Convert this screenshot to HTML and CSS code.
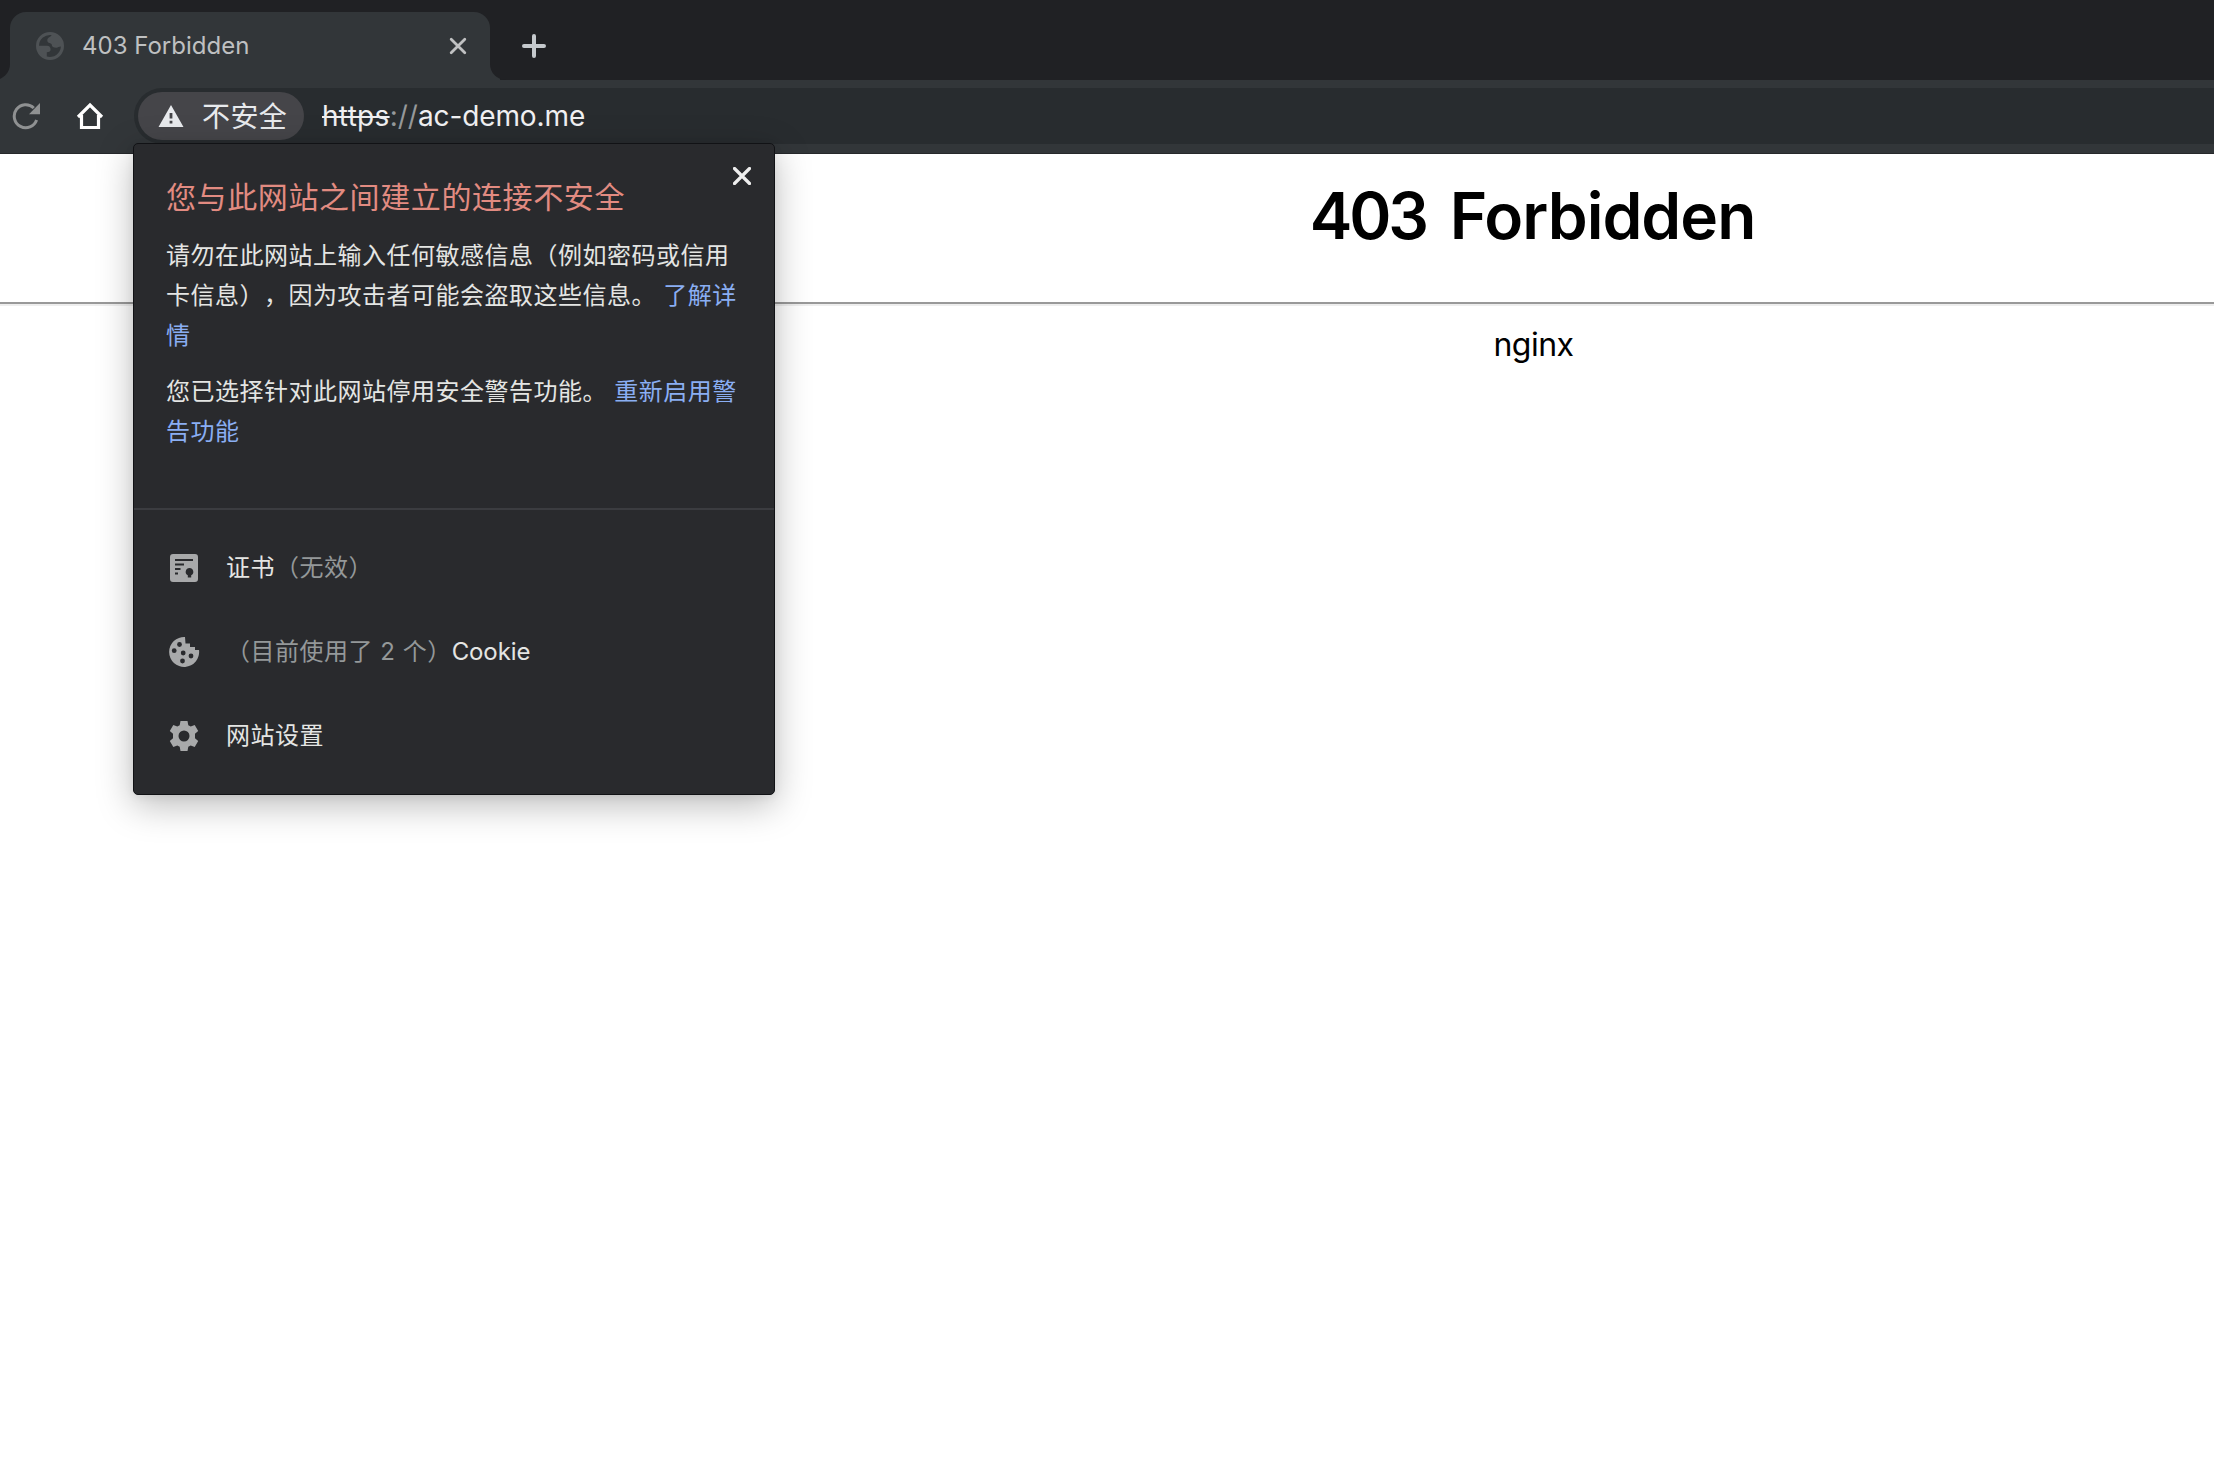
FILE: index.html
```html
<!DOCTYPE html>
<html lang="zh-CN">
<head>
<meta charset="utf-8">
<title>403 Forbidden</title>
<link rel="stylesheet" href="styles.css">
</head>
<body>
<header class="browser">
  <div class="tab-strip">
    <div class="tab">
      <svg class="globe" width="28" height="28" viewBox="0 0 28 28"><path fill="currentColor" fill-rule="evenodd" d="M14 0a14 14 0 1 0 0 28 14 14 0 0 0 0-28zM3 13.700A11 11 0 0 1 15.500 3.100C15.200 5.500 11.300 5 11.300 8.500c0 3 4.400 2.500 4.400 4 0 2.500 2 3.200 4.500 3.200 2 0 2.500-1.200 4.700-1.200A11 11 0 0 1 10.800 24.500v-4.300c2.500 0 3.800-.700 3.800-2.700 0-2.500-1.200-3.800-3.600-3.800z"/></svg>
      <span class="tab-title">403 Forbidden</span>
      <svg class="tab-close" width="18" height="18" viewBox="0 0 18 18"><path d="M2.200 2.200l13.600 13.600M15.800 2.200L2.200 15.800" fill="none" stroke="currentColor" stroke-width="2.800" stroke-linecap="round"/></svg>
    </div>
    <svg class="new-tab" width="24" height="24" viewBox="0 0 24 24"><path d="M12 2v20M2 12h20" fill="none" stroke="currentColor" stroke-width="4" stroke-linecap="round"/></svg>
  </div>
  <div class="toolbar">
    <svg class="reload" width="28" height="28" viewBox="0 0 28 28"><path d="M24.600 18A11.500 11.500 0 1 1 21.800 6" fill="none" stroke="currentColor" stroke-width="3"/><path d="M28 1v11.300H17z" fill="currentColor"/></svg>
    <svg class="home" width="28" height="28" viewBox="0 0 28 28"><path d="M2 15L14 3l12 12M5.500 13v12.500h17V13" fill="none" stroke="currentColor" stroke-width="3.200"/></svg>
    <div class="omnibox">
      <div class="security">
        <svg width="26" height="22" viewBox="0 0 26 22"><path fill="currentColor" fill-rule="evenodd" d="M13 0l12.500 22H.500zM11.600 8v5.500h2.800V8zm0 7.800v2.800h2.800v-2.800z"/></svg>
        <span>不安全</span>
      </div>
      <div class="url"><s>https</s><span class="sep">://</span><span class="host">ac-demo.me</span></div>
    </div>
  </div>
</header>
<main class="page">
  <h1><span class="code">403</span> Forbidden</h1>
  <div class="rule"></div>
  <p class="server">nginx</p>
</main>
<aside class="popup">
  <section class="warning">
    <svg class="popup-close" width="18" height="18" viewBox="0 0 18 18"><path d="M1.500 1.500l15 15M16.500 1.500l-15 15" fill="none" stroke="currentColor" stroke-width="3.200" stroke-linecap="round"/></svg>
    <h2>您与此网站之间建立的连接不安全</h2>
    <p>请勿在此网站上输入任何敏感信息（例如密码或信用<br>卡信息），因为攻击者可能会盗取这些信息。 <a>了解详<br>情</a></p>
    <p>您已选择针对此网站停用安全警告功能。 <a>重新启用警<br>告功能</a></p>
  </section>
  <ul class="settings">
    <li>
      <svg width="32" height="32" viewBox="0 0 32 32"><path fill="currentColor" fill-rule="evenodd" d="M5 2h22q3 0 3 3v22q0 3-3 3H5q-3 0-3-3V5q0-3 3-3zm2 5v2h18V7zm0 4.500v2h9v-2zm0 4.500v2h5.500v-2zm0 4.500v2h3v-2zm14.500-4.500a3.800 3.800 0 0 0-1.700 7.200V25.500h3.400V23.200a3.800 3.800 0 0 0-1.700-7.200z"/></svg>
      <span>证书<span class="muted">（无效）</span></span>
    </li>
    <li>
      <svg width="32" height="32" viewBox="0 0 32 32"><path fill="currentColor" d="M17 1A15 15 0 1 0 31 14h-4v-3h-5V7.500h-4.500z"/><g class="chips"><circle cx="11.500" cy="8.500" r="2.400"/><circle cx="6.200" cy="14.700" r="2.400"/><circle cx="15.200" cy="17" r="2.400"/><circle cx="23" cy="20" r="2.400"/><circle cx="14.500" cy="25" r="2.400"/></g></svg>
      <span><span class="muted">（目前使用了 2 个）</span><span class="cookie">Cookie</span></span>
    </li>
    <li>
      <svg width="32" height="32" viewBox="0 0 32 32"><path fill="currentColor" fill-rule="evenodd" d="M12.500 1h7l.800 4.200 2.400 1.400 4-1.500 3.500 6-3.200 2.700v4.400l3.200 2.700-3.500 6-4-1.500-2.400 1.400-.800 4.200h-7l-.800-4.200-2.400-1.400-4 1.500-3.500-6L5 18.200v-4.400l-3.200-2.700 3.500-6 4 1.500 2.400-1.400zM16 10.500a5.500 5.500 0 1 0 0 11 5.500 5.500 0 0 0 0-11z"/></svg>
      <span>网站设置</span>
    </li>
  </ul>
</aside>
</body>
</html>
```

FILE: styles.css
```css
* { box-sizing: border-box; }
html, body { margin: 0; height: 100%; }
body {
  position: relative;
  overflow: hidden;
  background: #fff;
  font-family: Inter, "Noto Sans CJK SC", sans-serif;
  text-spacing-trim: space-all;
}
svg { display: block; flex: none; }
h1, h2, p, ul { margin: 0; padding: 0; }

.browser { height: 154px; border-bottom: 1px solid #26282b; background: #323639; }
.tab-strip {
  display: flex;
  align-items: flex-start;
  height: 80px;
  padding: 12px 0 0 10px;
  background: linear-gradient(#323639, #323639) 0 100% / 500px 16px no-repeat, #202124;
}
.tab {
  position: relative;
  display: flex;
  align-items: center;
  width: 480px;
  height: 68px;
  padding: 0 23px 0 26px;
  border-radius: 16px 16px 0 0;
  background: #323639;
}
.tab::before, .tab::after {
  content: "";
  position: absolute;
  bottom: 0;
  width: 16px;
  height: 16px;
  background: #202124;
}
.tab::before { left: -16px; border-bottom-right-radius: 16px; }
.tab::after { right: -16px; border-bottom-left-radius: 16px; }
.globe { color: #4e5255; }
.tab-title { margin-left: 18px; padding-bottom: 2px; color: #bfc0c1; font-size: 24px; white-space: nowrap; }
.tab-close { margin-left: auto; color: #c0c1c2; }
.new-tab { margin: 22px 0 0 32px; color: #c5c9cd; }

.toolbar { display: flex; align-items: center; height: 72px; padding: 0 0 0 12px; }
.reload { color: #8f9192; }
.home { margin-left: 36px; color: #fff; }
.omnibox {
  display: flex;
  align-items: center;
  flex: 1;
  height: 56px;
  margin-left: 30px;
  padding-left: 4px;
  border-radius: 28px 0 0 28px;
  background: #282c2f;
}
.security {
  display: flex;
  align-items: center;
  width: 166px;
  height: 48px;
  padding-left: 20px;
  border-radius: 24px;
  background: #454549;
  color: #e8eaed;
  font-size: 28px;
  white-space: nowrap;
}
.security span { margin-left: 18px; padding-bottom: 3px; letter-spacing: 0.4px; }
.url { margin-left: 18px; color: #f0f0f2; font-size: 28px; white-space: nowrap; }
.url s { letter-spacing: 0.3px; }
.url .sep { color: #96999b; }
.url .host { letter-spacing: -0.1px; }

.page { text-align: center; color: #000; }
.page h1, .server { padding-left: 853px; }
.page h1 {
  padding-top: 22px;
  padding-left: 851px;
  font-size: 64px;
  line-height: 80px;
  font-weight: 600;
  letter-spacing: -1px;
  word-spacing: 9px;
}
.code { letter-spacing: -3.2px; }
.rule { height: 4px; margin-top: 46px; border-top: 2px solid #999; border-bottom: 2px solid #eee; }
.server { margin-top: 19px; font-size: 32px; line-height: 40px; letter-spacing: -0.5px; }

.popup {
  position: absolute;
  left: 133px;
  top: 143px;
  width: 642px;
  height: 652px;
  border: 1px solid #111215;
  border-radius: 5px;
  background: #292a2d;
  color: #e4e5e3;
  font-size: 24px;
  letter-spacing: 0.5px;
  white-space: nowrap;
  box-shadow: 0 10px 36px rgba(0, 0, 0, 0.27), 0 2px 10px rgba(0, 0, 0, 0.06);
}
.warning { position: relative; height: 366px; padding: 31px 0 0 32px; border-bottom: 2px solid #3b3c40; }
.popup-close { position: absolute; right: 23px; top: 23px; color: #eee; }
.popup h2 { color: #e28b81; font-size: 30px; line-height: 44px; font-weight: 400; letter-spacing: 0.6px; }
.popup p { margin-top: 16px; line-height: 40px; }
.popup h2 + p { margin-top: 17px; }
.popup a { color: #8aaef3; }
.settings { list-style: none; padding: 16px 0 0 34px; }
.settings li { display: flex; align-items: center; height: 84px; }
.settings svg { color: #a8a9aa; }
.settings li > span { margin-left: 26px; padding-bottom: 5px; }
.muted { color: #949899; }
.cookie { letter-spacing: -0.1px; }
.chips { fill: #292a2d; }
```
